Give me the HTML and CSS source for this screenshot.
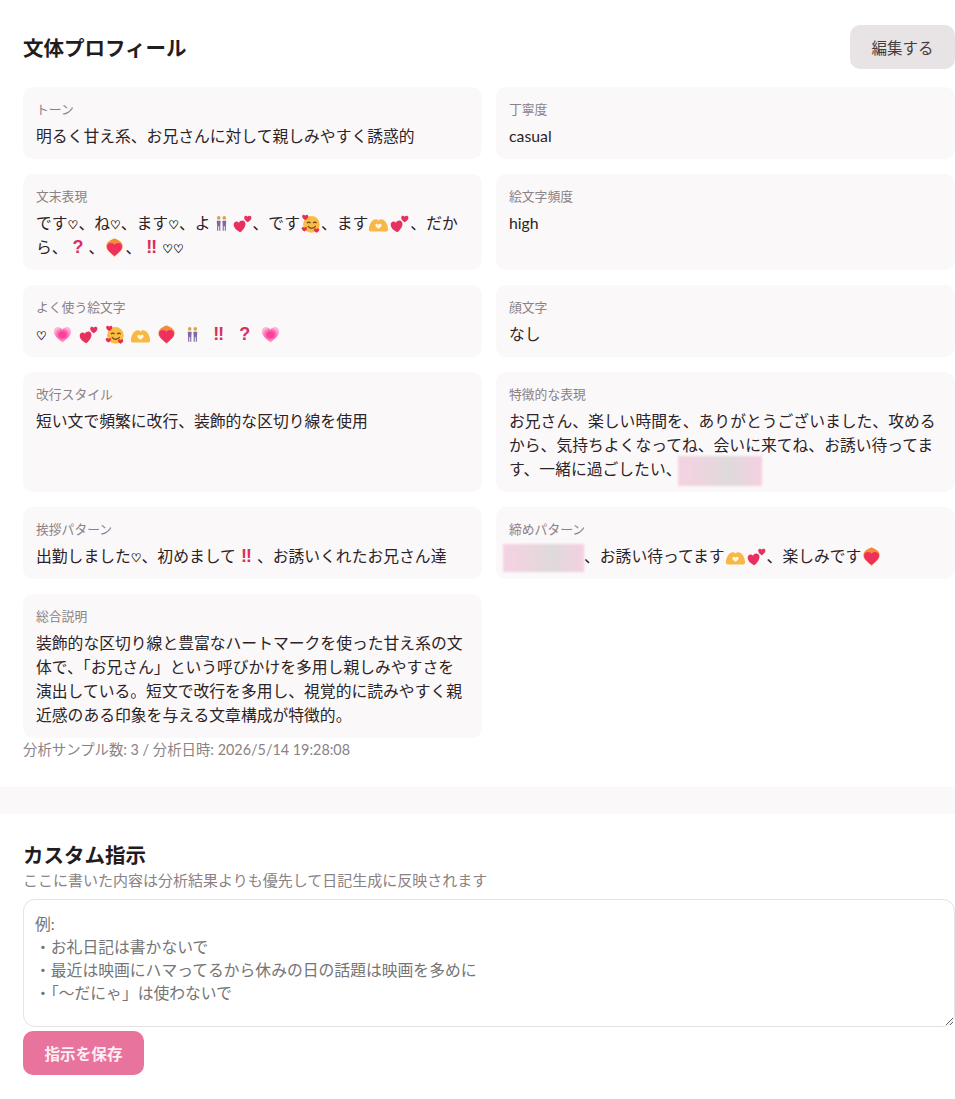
FILE: index.html
```html
<!DOCTYPE html>
<html lang="ja">
<head>
    <meta charset="UTF-8">
    <meta name="viewport" content="width=device-width, initial-scale=1.0">
    <title>文体プロフィール</title>
    <link rel="stylesheet" href="styles.css">
</head>
<body>
    <svg class="defs" width="0" height="0" aria-hidden="true">
        <defs>
            <radialGradient id="glow">
                <stop offset="0.35" stop-color="#f9409a"/>
                <stop offset="1" stop-color="#ffb6d8"/>
            </radialGradient>
            <symbol id="heart-glow" viewBox="0 0 24 24">
                <path d="M12 21C6 16.5 2 13 2 8.600C2 5.500 4.400 3.500 7 3.500C9 3.500 11 4.500 12 6.300C13 4.500 15 3.500 17 3.500C19.600 3.500 22 5.500 22 8.600C22 13 18 16.500 12 21Z" fill="url(#glow)"/>
            </symbol>
            <symbol id="two-hearts" viewBox="0 0 24 24">
                <path d="M9.500 22C5 19.500 1.500 16.500 2 12.500C2.400 9.500 6 8.500 8 11C9 8 13.500 7.500 15 10.500C16.500 14 13.500 19 9.500 22Z" fill="#e7305f"/>
                <path d="M18 10.500C15.500 9 13.500 7 14 4.800C14.500 3 16.800 2.700 17.800 4.200C18.800 2.500 21.800 2.600 22.200 4.800C22.500 7 20.500 9 18 10.500Z" fill="#e7305f"/>
            </symbol>
            <symbol id="smile-hearts" viewBox="0 0 24 24">
                <circle cx="13" cy="13" r="9.500" fill="#f9bc45"/>
                <path d="M8 11.500Q10 9.500 12 11.500M15 11.500Q17 9.500 19 11.500" fill="none" stroke="#6b3f1d" stroke-width="1.400"/>
                <path d="M9 15Q13 20 18 15" fill="none" stroke="#6b3f1d" stroke-width="1.400"/>
                <path d="M6 8C3.500 6.500 2 5 2.500 3.300C3 1.800 5 1.800 6 3C7 1.800 9 1.800 9.500 3.300C10 5 8.500 6.500 6 8Z" fill="#e5304f"/>
                <path d="M5 21C3 19.800 1.500 18.500 2 17C2.400 15.700 4 15.700 5 16.800C6 15.700 7.600 15.700 8 17C8.400 18.500 7 19.800 5 21Z" fill="#e5304f"/>
                <path d="M19 22.500C17 21.300 15.500 20 16 18.500C16.400 17.200 18 17.200 19 18.300C20 17.200 21.600 17.200 22 18.500C22.400 20 21 21.300 19 22.500Z" fill="#e5304f"/>
            </symbol>
            <symbol id="heart-hands" viewBox="0 0 24 24">
                <path d="M1 19C1 12.500 5 7 9 7C10.500 7 11.500 7.800 12 8.800C12.500 7.800 13.500 7 15 7C19 7 23 12.500 23 19C23 20.500 21.500 21 20 21H4C2.500 21 1 20.500 1 19Z" fill="#f7b845"/>
                <path d="M12 18C9.500 16.500 8 15 8.500 13.500C9 12 11 12 12 13.300C13 12 15 12 15.500 13.500C16 15 14.500 16.500 12 18Z" fill="#fff6e0"/>
            </symbol>
            <symbol id="heart-fire" viewBox="0 0 24 24">
                <path d="M12 1.500C14 3 17 3.500 19 5.500C22 8.500 22 12 19.500 15.500L12 22.500L4.500 15.500C2 12 2 8.500 5 5.500C7 3.500 10 3 12 1.500Z" fill="#f68a3a"/>
                <path d="M12 21.500C7 17.500 3.500 14.500 3.500 11C3.500 8.300 5.800 6.800 8 6.800C9.700 6.800 11.200 7.600 12 9C12.800 7.600 14.300 6.800 16 6.800C18.200 6.800 20.500 8.300 20.500 11C20.500 14.500 17 17.500 12 21.500Z" fill="#ee2f60"/>
            </symbol>
            <symbol id="couple" viewBox="-3 -3 30 30">
                <circle cx="8" cy="4" r="2.600" fill="#d9a441"/>
                <circle cx="16" cy="4" r="2.600" fill="#d9a441"/>
                <path d="M5.200 8H10.800L10.300 15V22.500H8.700V16H7.300V22.500H5.700V15Z" fill="#8068a8"/>
                <path d="M13.200 8H18.800L18.300 15V22.500H16.700V16H15.300V22.500H13.700V15Z" fill="#8068a8"/>
            </symbol>
        </defs>
    </svg>

    <section class="panel">
        <div class="panel-head">
            <h2 class="title">文体プロフィール</h2>
            <button class="btn-edit">編集する</button>
        </div>

        <div class="cards">
            <div class="card">
                <div class="label">トーン</div>
                <div class="value">明るく甘え系、お兄さんに対して親しみやすく誘惑的</div>
            </div>
            <div class="card">
                <div class="label">丁寧度</div>
                <div class="value">casual</div>
            </div>
            <div class="card">
                <div class="label">文末表現</div>
                <div class="value">です<span class="hrt">♡</span>、ね<span class="hrt">♡</span>、ます<span class="hrt">♡</span>、よ<svg class="emoji"><use href="#couple"/></svg><svg class="emoji"><use href="#two-hearts"/></svg>、です<svg class="emoji"><use href="#smile-hearts"/></svg>、ます<svg class="emoji"><use href="#heart-hands"/></svg><svg class="emoji"><use href="#two-hearts"/></svg>、だから、<span class="mark">?</span>、<svg class="emoji"><use href="#heart-fire"/></svg>、<span class="mark">‼</span><span class="hrt">♡♡</span></div>
            </div>
            <div class="card">
                <div class="label">絵文字頻度</div>
                <div class="value">high</div>
            </div>
            <div class="card">
                <div class="label">よく使う絵文字</div>
                <div class="value emoji-list"><span class="hrt">♡</span> <svg class="emoji"><use href="#heart-glow"/></svg> <svg class="emoji"><use href="#two-hearts"/></svg> <svg class="emoji"><use href="#smile-hearts"/></svg> <svg class="emoji"><use href="#heart-hands"/></svg> <svg class="emoji"><use href="#heart-fire"/></svg> <svg class="emoji"><use href="#couple"/></svg> <span class="mark">‼</span> <span class="mark">?</span> <svg class="emoji"><use href="#heart-glow"/></svg></div>
            </div>
            <div class="card">
                <div class="label">顔文字</div>
                <div class="value">なし</div>
            </div>
            <div class="card">
                <div class="label">改行スタイル</div>
                <div class="value">短い文で頻繁に改行、装飾的な区切り線を使用</div>
            </div>
            <div class="card">
                <div class="label">特徴的な表現</div>
                <div class="value">お兄さん、楽しい時間を、ありがとうございました、攻めるから、気持ちよくなってね、会いに来てね、お誘い待ってます、一緒に過ごしたい、<span class="blur"></span></div>
            </div>
            <div class="card">
                <div class="label">挨拶パターン</div>
                <div class="value">出勤しました<span class="hrt">♡</span>、初めまして<span class="mark">‼</span>、お誘いくれたお兄さん達</div>
            </div>
            <div class="card">
                <div class="label">締めパターン</div>
                <div class="value"><span class="blur blur-start"></span>、お誘い待ってます<svg class="emoji"><use href="#heart-hands"/></svg><svg class="emoji"><use href="#two-hearts"/></svg>、楽しみです<svg class="emoji"><use href="#heart-fire"/></svg></div>
            </div>
            <div class="card">
                <div class="label">総合説明</div>
                <div class="value">装飾的な区切り線と豊富なハートマークを使った甘え系の文体で、「お兄さん」という呼びかけを多用し親しみやすさを演出している。短文で改行を多用し、視覚的に読みやすく親近感のある印象を与える文章構成が特徴的。</div>
            </div>
        </div>

        <p class="meta">分析サンプル数: 3 / 分析日時: 2026/5/14 19:28:08</p>
    </section>

    <div class="band"></div>

    <section class="panel panel-custom">
        <h2 class="title">カスタム指示</h2>
        <p class="sub">ここに書いた内容は分析結果よりも優先して日記生成に反映されます</p>
        <textarea class="input" placeholder="例:&#10;・お礼日記は書かないで&#10;・最近は映画にハマってるから休みの日の話題は映画を多めに&#10;・「〜だにゃ」は使わないで"></textarea>
        <button class="btn-save">指示を保存</button>
    </section>
</body>
</html>
```

FILE: styles.css
```css
*{
    box-sizing: border-box;
    padding: 0;
    margin: 0;
}
body{
    background: #fff;
    color: #2b2326;
    font-family: Lato, "Noto Sans CJK JP", sans-serif;
    overflow-x: hidden;
}
.defs{
    position: absolute;
}
.panel{
    padding: 25px 0 26px 23px;
}
.panel-head{
    display: flex;
    justify-content: space-between;
    align-items: center;
    margin-bottom: 18px;
}
.title{
    font-size: 20.5px;
    font-weight: 700;
    color: #231c1e;
}
.btn-edit{
    height: 44px;
    width: 105px;
    border: none;
    border-radius: 10px;
    background: #e8e4e5;
    color: #443d3f;
    font-family: inherit;
    font-size: 15.5px;
}
.cards{
    display: grid;
    grid-template-columns: 1fr 1fr;
    gap: 15px 14px;
}
.card{
    background: #fbf8f9;
    border-radius: 10px;
    padding: 12px 13px 11px;
}
.label{
    color: #8a8285;
    font-size: 12.8px;
    line-height: 20px;
    margin-bottom: 5px;
}
.value{
    font-size: 15.8px;
    line-height: 24px;
}
.emoji-list{
    word-spacing: 1px;
}
.hrt{
    font-family: "DejaVu Sans", sans-serif;
    font-size: 12px;
    font-weight: 700;
    line-height: 1;
    -webkit-text-stroke: 0.3px #2b2326;
}
.emoji{
    width: 21px;
    height: 21px;
    margin-block: -4px;
    vertical-align: -1px;
}
.mark{
    display: inline-block;
    width: 21px;
    text-align: center;
    color: #d92f5b;
    font-family: "Liberation Sans", sans-serif;
    font-weight: 700;
    font-size: 18px;
    line-height: 1;
}
.blur{
    display: inline-block;
    width: 84px;
    height: 30px;
    margin-block: -8px;
    margin-left: -4px;
    vertical-align: -3px;
    background: linear-gradient(90deg, #f4d3e2, #ecd5de 30%, #dedadb 60%, #f4d0e1);
    filter: blur(1px);
}
.blur-start{
    width: 81px;
    height: 28px;
    margin-left: -6px;
    vertical-align: -2px;
}
.meta{
    color: #8a8285;
    font-size: 14.4px;
    line-height: 22px;
    margin-top: 1px;
}
.band{
    height: 27px;
    background: #fbf8f9;
}
.panel-custom{
    padding-top: 28px;
}
.panel-custom .title{
    line-height: 26px;
}
.sub{
    color: #8a8285;
    font-size: 15px;
    line-height: 24px;
}
.input{
    display: block;
    width: 100%;
    height: 128px;
    margin-top: 7px;
    padding: 12px 11px;
    border: 1px solid #e6e1e3;
    border-radius: 12px;
    background: #fff;
    font-family: inherit;
    font-size: 15.8px;
    line-height: 23px;
}
.input::placeholder{
    color: #757575;
    opacity: 1;
}
.btn-save{
    display: block;
    width: 121px;
    height: 44px;
    margin-top: 4px;
    border: none;
    border-radius: 10px;
    background: #e8739c;
    color: #fdeef3;
    font-family: inherit;
    font-size: 15.6px;
    font-weight: 700;
}
```
